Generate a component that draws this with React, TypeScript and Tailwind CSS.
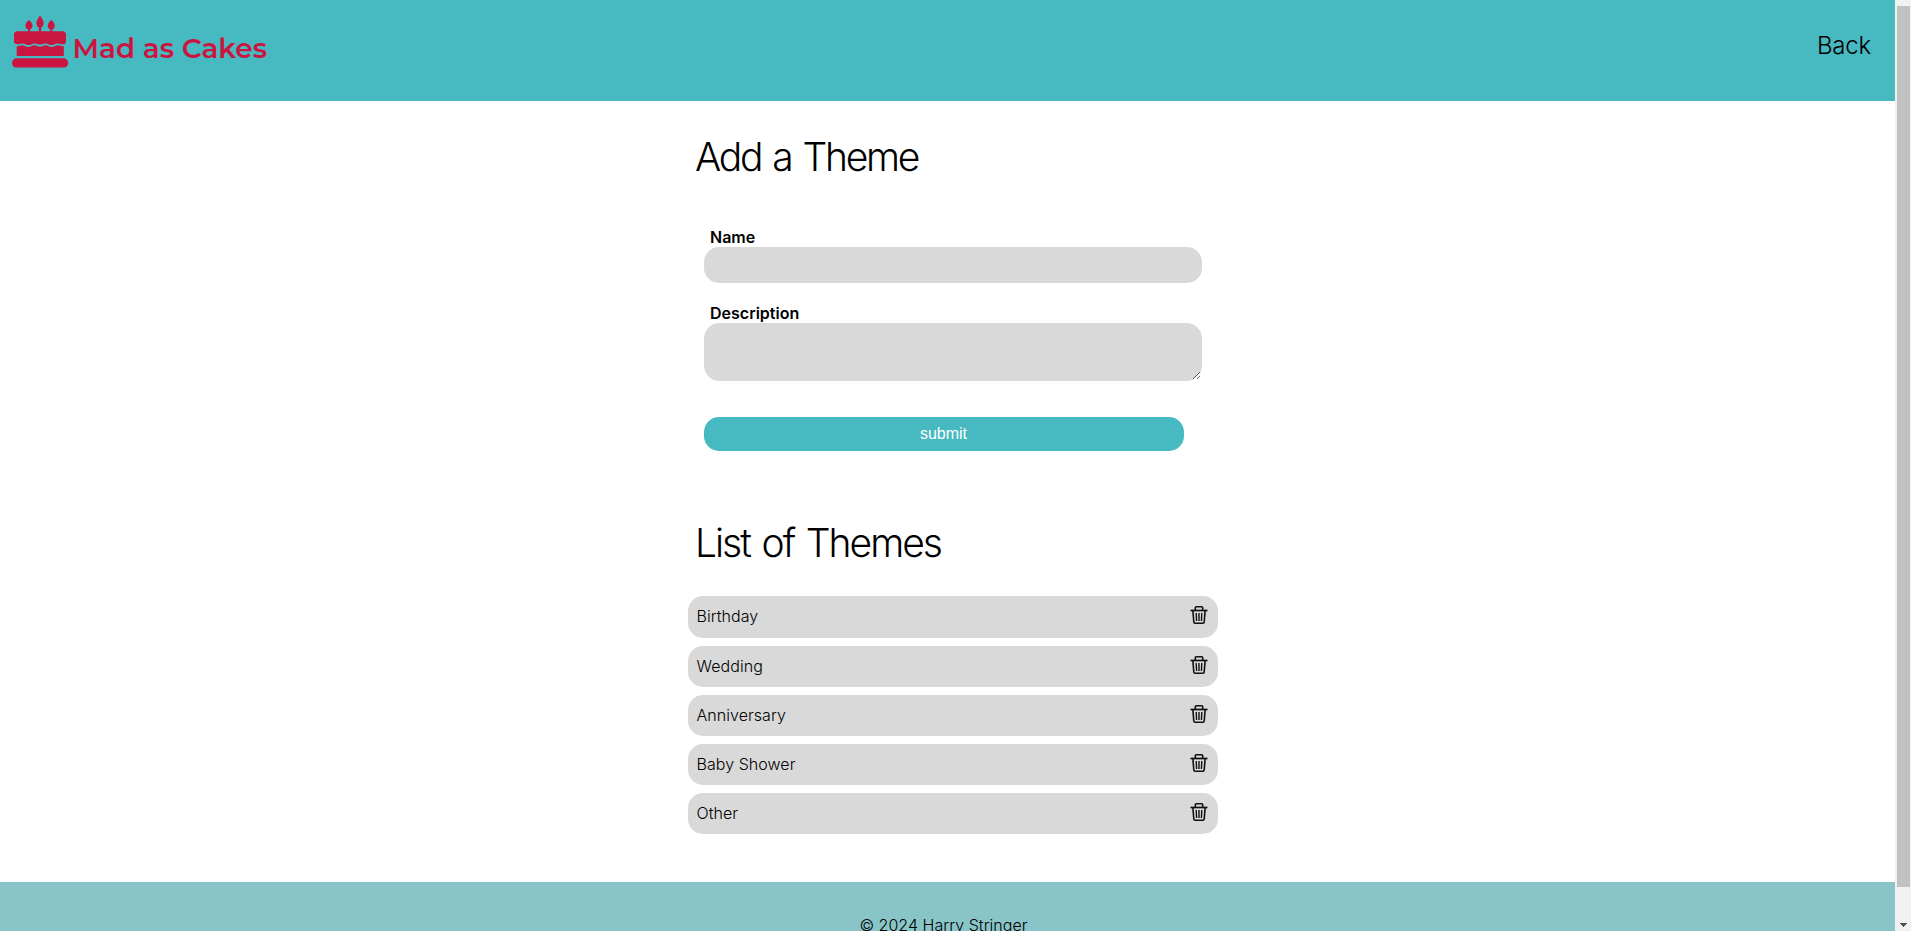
const themes = ["Birthday", "Wedding", "Anniversary", "Baby Shower", "Other"];

function Logo() {
  return (
    <svg
      className="mt-[12px] ml-[10px] block"
      width="262"
      height="62"
      viewBox="10 12 262 62"
      fill="#cb1541"
      role="img"
      aria-label="Mad as Cakes"
    >
      <path d="M40 15.5c2.4 3.2 3.6 5.500 3.600 7.700 0 2.300-1 3.800-2.500 4.500V32h-2.200v-4.300c-1.500-.7-2.500-2.200-2.500-4.500 0-2.200 1.200-4.500 3.600-7.700z" />
      <path d="M29 20c2.300 2 3.500 3.700 3.500 5.700 0 1.900-1 3.200-2.500 3.700V32h-2v-2.600c-1.500-.5-2.500-1.800-2.500-3.700 0-2 1.200-3.700 3.500-5.700z" />
      <path d="M51.300 20c2.300 2 3.500 3.700 3.500 5.700 0 1.900-1 3.200-2.500 3.700V32h-2v-2.600c-1.500-.5-2.500-1.800-2.500-3.700 0-2 1.200-3.700 3.500-5.700z" />
      <path d="M17.500 31.300h45q3.500 0 3.500 3.500V41q0 3-2.500 3.200c-3 0-3.500-.8-6-.8-2.700 0-3.200 1.700-6 1.700s-3.300-1.700-6-1.700-3 1.200-5.500 1.200-3-1.200-5.500-1.200-3.200 1.700-6 1.700-3.300-1.700-6-1.700c-2.300 0-2.800.8-4.500.8Q14 44 14 42v-7.200q0-3.500 3.500-3.500z" />
      <path d="M16.700 46.200c2.400.2 3.300-.9 5.500-.9 2.700 0 3.200 1.800 6 1.800s3.500-1.800 6.200-1.800 3 1.400 5.600 1.400 3-1.400 5.600-1.400 3.400 1.800 6.200 1.800 3.200-1.800 6-1.800c2.200 0 3.400 1.100 6 .9V56H16.700z" />
      <rect x="12" y="58.300" width="56.200" height="9.300" rx="4.600" />
      <text
        x="72.5"
        y="58"
        className="font-['Montserrat','Inter',sans-serif] text-[27px] font-semibold"
        textLength="194.500"
        lengthAdjust="spacingAndGlyphs"
      >
        Mad as Cakes
      </text>
    </svg>
  );
}

function TrashIcon() {
  return (
    <svg
      className="-mt-px"
      width="18"
      height="20"
      viewBox="0 0 18 20"
      fill="none"
      stroke="#111"
      strokeLinejoin="round"
      aria-hidden="true"
    >
      <path strokeWidth="1.700" d="M.5 5.500h17" />
      <path strokeWidth="1.600" d="M5.300 5V2.800q0-1 1-1h5.400q1 0 1 1V5" />
      <path strokeWidth="1.600" d="m2.900 6 .9 11q.1 1.200 1.300 1.200h7.800q1.200 0 1.300-1.200l.9-11" />
      <path strokeWidth="1.400" d="m6.200 8 .4 8M9 8v8M11.800 8l-.4 8" />
    </svg>
  );
}

function Scrollbar() {
  return (
    <div className="flex w-4 shrink-0 flex-col items-center bg-[#f1f1f1] pt-[6px]">
      <div className="ml-px h-[881px] w-[13px] bg-[#c1c1c1]" />
      <svg className="mt-[36px] ml-px" width="7" height="4" viewBox="0 0 7 4" fill="#505050" shapeRendering="crispEdges">
        <path d="M0 0h7v1H6v1H5v1H4v1H3V3H2V2H1V1H0z" />
      </svg>
    </div>
  );
}

export default function App() {
  return (
    <div className="flex h-[931px] w-full overflow-hidden bg-white font-['Inter',sans-serif] font-[350] text-black">
      <div className="flex min-w-0 flex-1 flex-col">
        <header className="flex h-[101px] shrink-0 items-start justify-between bg-[#47b9c0]">
          <Logo />
          <a className="mt-[28px] mr-[24px] text-[24px] leading-[36px] tracking-[-0.2px]" href="#">
            Back
          </a>
        </header>

        <main className="flex h-[781px] shrink-0 flex-col pl-[688px]">
          <h1 className="mt-[31px] ml-[7px] text-[39px] leading-[49px] tracking-[-2.3px] [word-spacing:2.5px]">
            Add a Theme
          </h1>
          <form className="mt-[46px] ml-4 flex flex-col items-start">
            <label htmlFor="name" className="ml-[6px] text-[16px] leading-5 font-semibold">
              Name
            </label>
            <input id="name" className="h-9 w-[498px] rounded-[15px] bg-[#d9d9d9] px-2 outline-none" />
            <label htmlFor="description" className="mt-5 ml-[6px] text-[16px] leading-5 font-semibold">
              Description
            </label>
            <textarea
              id="description"
              className="block h-[58px] w-[498px] rounded-[15px] border border-[#d9d9d9] bg-[#d9d9d9] p-2 outline-none"
            />
            <button
              type="button"
              className="mt-9 h-[34px] w-[480px] rounded-[15px] bg-[#47b9c0] pr-px font-['Liberation_Sans',Arial,sans-serif] text-[16px] font-normal text-white"
            >
              submit
            </button>
          </form>
          <h2 className="mt-[67px] ml-[7px] text-[39px] leading-[49px] tracking-[-2px] [word-spacing:2.7px]">
            List of Themes
          </h2>
          <ul className="mt-[29px] flex flex-col gap-2">
            {themes.map((theme) => (
              <li
                key={theme}
                className="flex h-[41px] w-[530px] items-start justify-between rounded-[15px] bg-[#d9d9d9] pt-[10px] pr-[10px] pl-[8.5px] text-[16px] leading-5 first:h-[42px]"
              >
                <span className="tracking-[0.05px]">{theme}</span>
                <TrashIcon />
              </li>
            ))}
          </ul>
        </main>

        <footer className="flex h-[49px] shrink-0 items-start justify-center overflow-hidden bg-[#89c5c8] pt-[33px] pr-[8px] text-[16px] leading-5 tracking-[0.03px]">
          © 2024 Harry Stringer
        </footer>
      </div>
      <Scrollbar />
    </div>
  );
}
